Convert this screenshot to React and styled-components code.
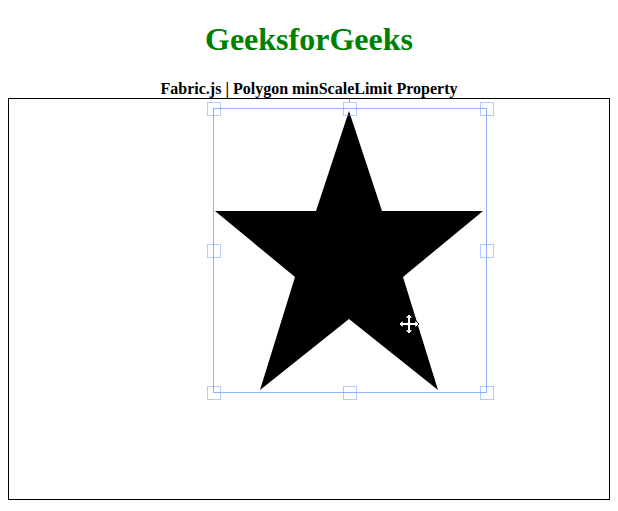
import React from 'react';
import styled, { createGlobalStyle } from 'styled-components';

const GlobalStyle = createGlobalStyle`
  body {
    margin: 0;
    padding: 0 8px 8px;
    font-family: "Liberation Serif", "Times New Roman", serif;
    font-size: 16px;
    background: #fff;
    color: #000;
  }
`;

const Header = styled.div`
  text-align: center;
`;

const Title = styled.h1`
  color: green;
  font-size: 32px;
  font-weight: bold;
  line-height: 37px;
  margin: 21px 0 21px;
`;

const Subtitle = styled.b`
  display: block;
  font-weight: bold;
  line-height: 19px;
`;

const CanvasFrame = styled.div`
  position: relative;
  width: 600px;
  height: 400px;
  border: 1px solid #000;
`;

const Stage = styled.svg`
  display: block;
  overflow: hidden;
`;

const CursorIcon = styled.svg`
  position: absolute;
  left: ${(p) => p.$x - 11}px;
  top: ${(p) => p.$y - 11}px;
  pointer-events: none;
`;

// star polygon, in canvas coordinates
const star = [
  [340, 12], [373, 112], [474, 112], [394, 178], [429, 291],
  [340, 220], [251, 291], [286, 178], [206, 112], [307, 112],
];

const box = { left: 204.5, top: 9.5, right: 477.5, bottom: 293.5 };
const HANDLE = 13;

const handles = () => {
  const cx = (box.left + box.right) / 2;
  const cy = (box.top + box.bottom) / 2;
  return [
    [box.left, box.top], [cx, box.top], [box.right, box.top],
    [box.left, cy], [box.right, cy],
    [box.left, box.bottom], [cx, box.bottom], [box.right, box.bottom],
  ].map(([x, y]) => [Math.round(x) - 0.5, Math.round(y) - 0.5]);
};

const MoveCursor = ({ x, y }) => (
  <CursorIcon $x={x} $y={y} width="22" height="22" viewBox="-11 -11 22 22">
    <path
      d="M0,-10 L-4,-6 L-1.5,-6 L-1.5,-1.5 L-6,-1.5 L-6,-4 L-10,0 L-6,4 L-6,1.5 L-1.5,1.5 L-1.5,6 L-4,6 L0,10 L4,6 L1.5,6 L1.5,1.5 L6,1.5 L6,4 L10,0 L6,-4 L6,-1.5 L1.5,-1.5 L1.5,-6 L4,-6 Z"
      fill="#fff"
      stroke="#000"
      strokeWidth="1"
    />
  </CursorIcon>
);

const App = () => {
  const midX = Math.round((box.left + box.right) / 2) - 0.5;
  return (
    <>
      <GlobalStyle />
      <Header>
        <Title>GeeksforGeeks</Title>
        <Subtitle>Fabric.js | Polygon minScaleLimit Property</Subtitle>
      </Header>
      <CanvasFrame>
        <Stage width="600" height="400" viewBox="0 0 600 400">
          <polygon points={star.map((p) => p.join(',')).join(' ')} fill="#000" />
          <line x1={midX} y1={-40} x2={midX} y2={box.top - HANDLE / 2} stroke="rgba(102,153,255,0.75)" />
          <rect
            x={box.left}
            y={box.top}
            width={box.right - box.left}
            height={box.bottom - box.top}
            fill="none"
            stroke="rgba(102,153,255,0.75)"
          />
          {handles().map(([x, y], i) => (
            <rect
              key={i}
              x={x - HANDLE / 2 + 0.5}
              y={y - HANDLE / 2 + 0.5}
              width={HANDLE}
              height={HANDLE}
              fill="none"
              stroke="rgba(102,153,255,0.5)"
            />
          ))}
        </Stage>
        <MoveCursor x={400} y={225} />
      </CanvasFrame>
    </>
  );
};

export default App;
